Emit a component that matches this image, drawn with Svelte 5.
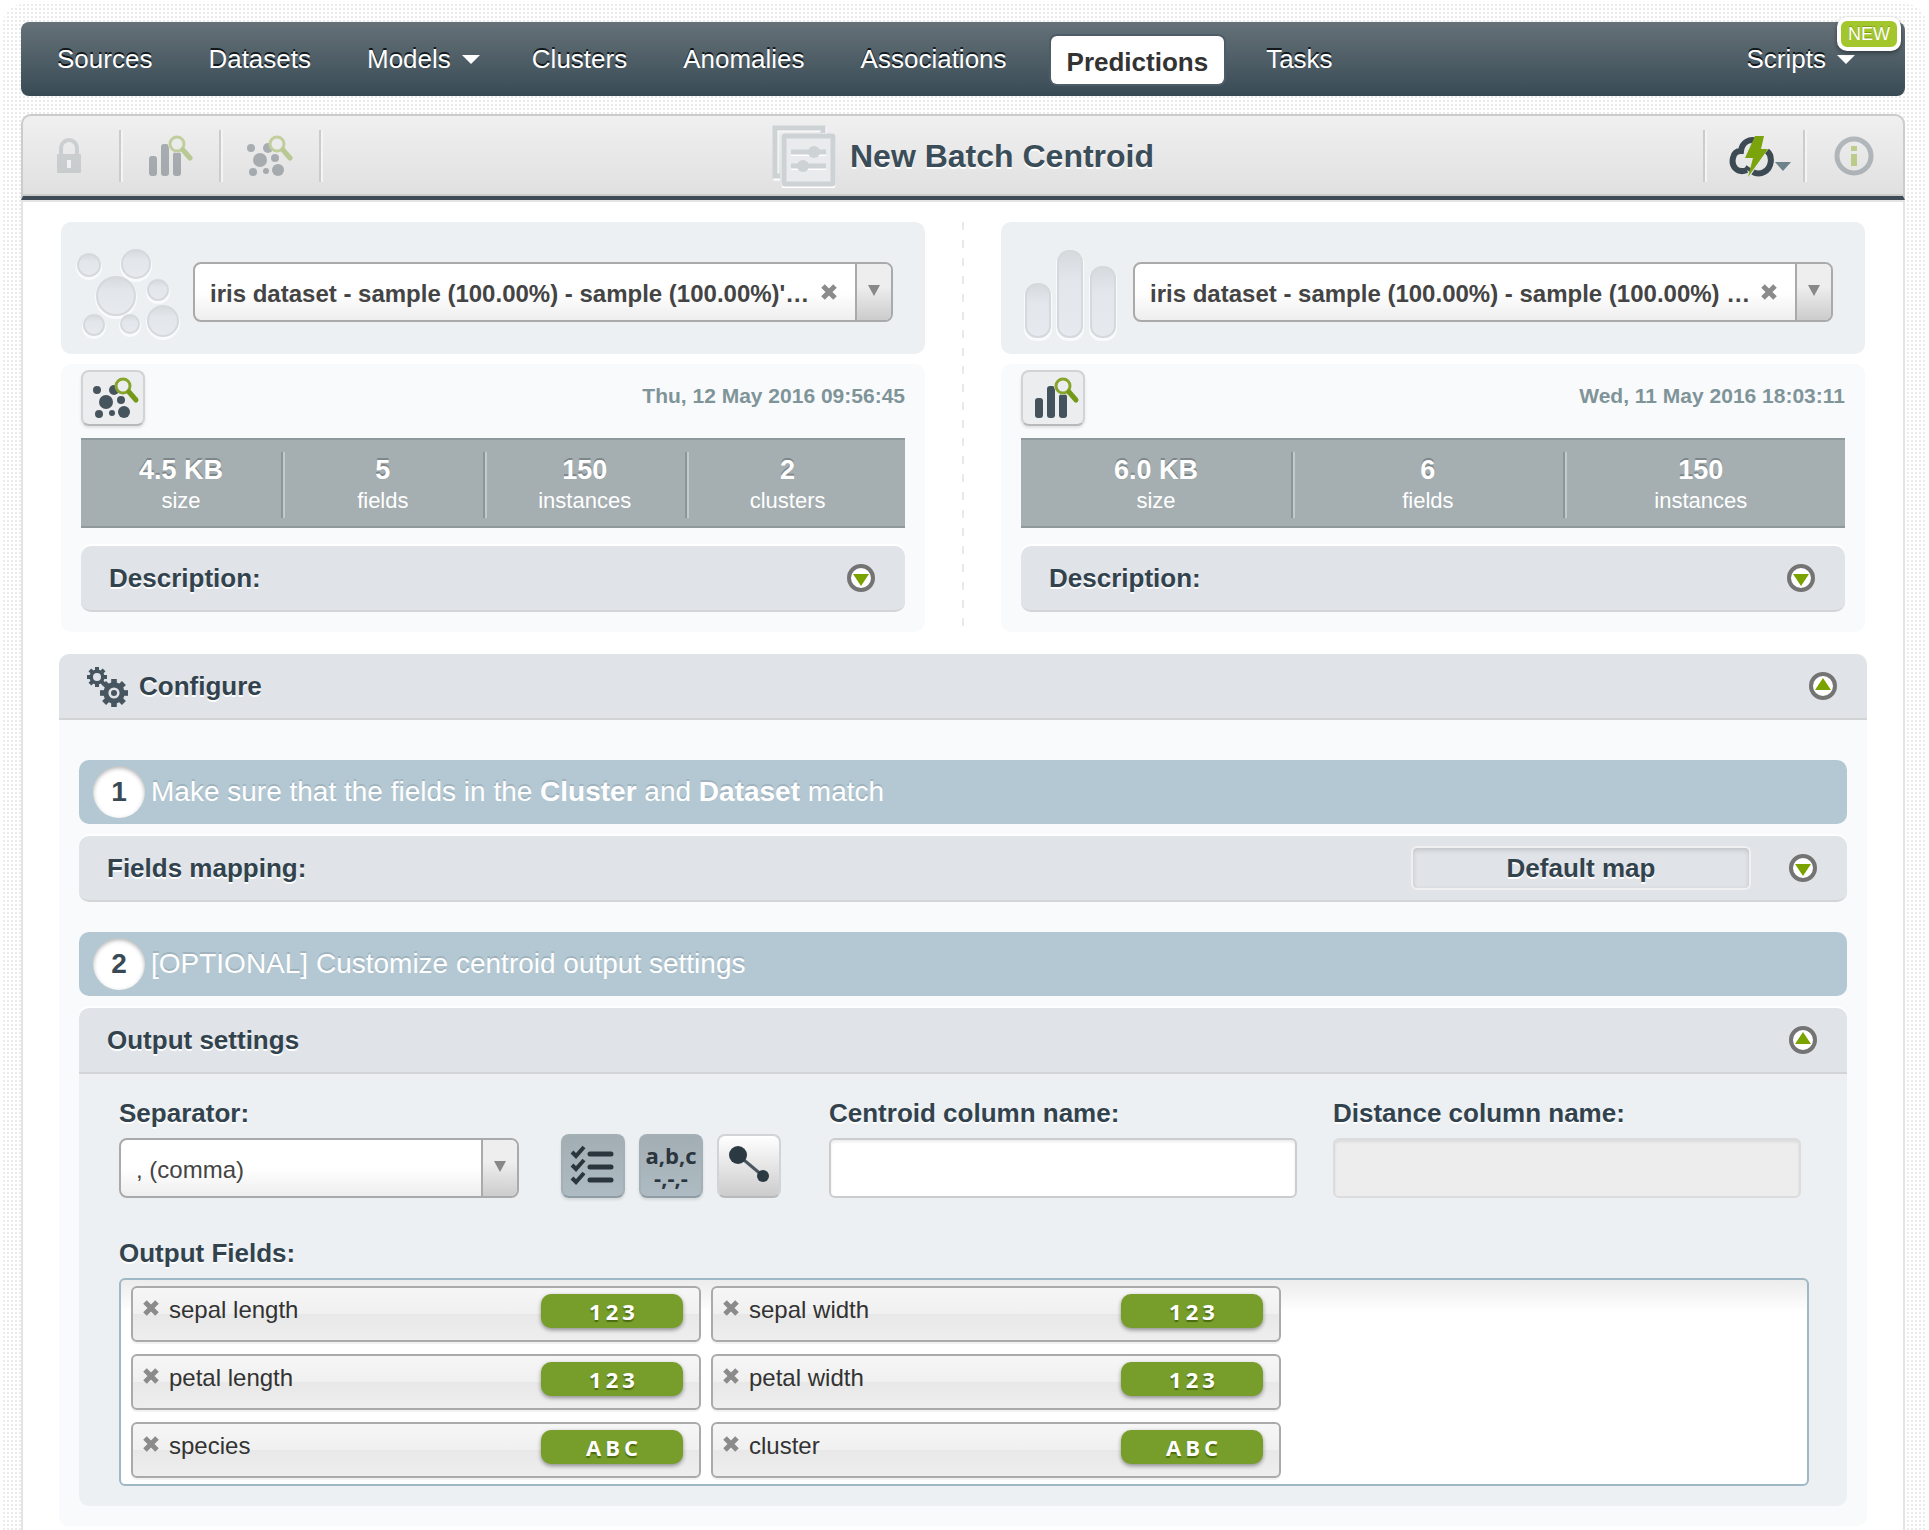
<script>
let menu = [
    { name: "Sources" },
    { name: "Datasets" },
    { name: "Models", caret: true },
    { name: "Clusters" },
    { name: "Anomalies" },
    { name: "Associations" },
    { name: "Predictions", active: true },
    { name: "Tasks" }
]

let sources = $state([
    {
        id: "cluster",
        label: "Cluster",
        name: "iris dataset - sample (100.00%) - sample (100.00%)'…",
        date: "Thu, 12 May 2016 09:56:45",
        stats: [["4.5 KB", "size"], ["5", "fields"], ["150", "instances"], ["2", "clusters"]],
        open: false
    },
    {
        id: "dataset",
        label: "Dataset",
        name: "iris dataset - sample (100.00%) - sample (100.00%) …",
        date: "Wed, 11 May 2016 18:03:11",
        stats: [["6.0 KB", "size"], ["6", "fields"], ["150", "instances"]],
        open: false
    }
])

let fields = $state([
    { name: "sepal length", type: "123" },
    { name: "sepal width", type: "123" },
    { name: "petal length", type: "123" },
    { name: "petal width", type: "123" },
    { name: "species", type: "ABC" },
    { name: "cluster", type: "ABC" }
])

let header = $state(true)
let allFields = $state(true)
let distance = $state(false)
let centroidName = $state("")
let distanceName = $state("")
let configureOpen = $state(true)
let mappingOpen = $state(false)
let outputOpen = $state(true)

function removeField(field) {
    fields = fields.filter((f) => f !== field)
}

// angles of the gear teeth
let teeth = [0, 45, 90, 135, 180, 225, 270, 315]
</script>

{#snippet cross()}
    <svg class="cross" viewBox="0 0 16 16" aria-hidden="true">
        <path d="M2 2L14 14M14 2L2 14" stroke="#8b8b8b" stroke-width="5" />
    </svg>
{/snippet}

{#snippet magnifier()}
    <circle cx="31" cy="10" r="7" fill="none" stroke="#86a52a" stroke-width="3" />
    <path d="M37 16L44 24" stroke="#759918" stroke-width="5" stroke-linecap="round" />
{/snippet}

{#snippet clusterIcon()}
    <svg class="tool" viewBox="0 0 48 44" aria-hidden="true">
        <g fill="#46545e">
            <circle cx="5" cy="14" r="4" />
            <circle cx="22" cy="14" r="5" />
            <circle cx="14" cy="26" r="7" />
            <circle cx="29" cy="24" r="4" />
            <circle cx="7" cy="38" r="4" />
            <circle cx="20" cy="37" r="3" />
            <circle cx="32" cy="36" r="6" />
        </g>
        <circle cx="31" cy="10" r="7" fill="#ecedee" />
        {@render magnifier()}
    </svg>
{/snippet}

{#snippet barsIcon()}
    <svg class="tool" viewBox="0 0 48 44" aria-hidden="true">
        <g fill="#43525c">
            <rect x="3" y="22" width="8" height="20" rx="3" />
            <rect x="15" y="10" width="8" height="32" rx="3" />
            <rect x="27" y="18" width="8" height="24" rx="3" />
        </g>
        <circle cx="31" cy="10" r="9" fill="#ecedee" />
        {@render magnifier()}
    </svg>
{/snippet}

{#snippet toggle(open)}
    <svg class="toggle" viewBox="0 0 32 32" aria-hidden="true">
        <circle cx="16" cy="16" r="12" fill="#fff" stroke="#747474" stroke-width="4" />
        {#if open}
            <path d="M16 8L24 20H8Z" fill="#7ba300" />
        {:else}
            <path d="M16 24L24 12H8Z" fill="#7ba300" />
        {/if}
    </svg>
{/snippet}

{#snippet gear(x, y, r)}
    <g transform="translate({x} {y})">
        {#each teeth as angle}
            <rect x={-r / 5} y={-r} width={r / 2.5} height={r / 2} fill="#46555f" transform="rotate({angle})" />
        {/each}
        <circle r={r * 0.58} fill="none" stroke="#46555f" stroke-width={r * 0.36} />
    </g>
{/snippet}

<div class="page">
    <nav>
        {#each menu as item}
            <a href="#{item.name.toLowerCase()}" class:active={item.active} class:more={item.caret}>
                {item.name}
                {#if item.caret}<span class="caret"></span>{/if}
            </a>
        {/each}
        <a href="#scripts" class="more scripts">
            Scripts <span class="caret"></span>
            <span class="new">NEW</span>
        </a>
    </nav>

    <main>
        <header>
            <div class="tools">
                <button class="dim" aria-label="Privacy">
                    <svg class="tool" viewBox="0 0 48 44" aria-hidden="true">
                        <path d="M15 22V14a8 8 0 0 1 16 0V22" fill="none" stroke="#a0a7ab" stroke-width="4" />
                        <rect x="11" y="20" width="24" height="19" rx="1" fill="#a0a7ab" />
                        <path d="M23 26V34" stroke="#fff" stroke-width="4" />
                    </svg>
                </button>
                <button class="dim" aria-label="View dataset">{@render barsIcon()}</button>
                <button class="dim" aria-label="View cluster">{@render clusterIcon()}</button>
            </div>
            <h1>
                <svg class="batch" viewBox="0 0 64 64" aria-hidden="true">
                    <path d="M8 54H4V5H52V10" fill="none" stroke="#fff" stroke-width="5" />
                    <path d="M8 52H3V4H51V9" fill="none" stroke="#cdd2d4" stroke-width="5" />
                    <rect x="12" y="14" width="49" height="48" rx="1" fill="none" stroke="#fff" stroke-width="5" />
                    <rect x="12" y="12" width="49" height="48" rx="1" fill="#e9ebec" stroke="#cdd2d4" stroke-width="5" />
                    <path d="M19 30H54M19 44H54" stroke="#fff" stroke-width="4" />
                    <path d="M19 28H54M19 42H54" stroke="#cdd2d4" stroke-width="5" />
                    <circle cx="42" cy="28" r="6" fill="#cdd2d4" />
                    <circle cx="31" cy="42" r="6" fill="#cdd2d4" />
                </svg>
                New Batch Centroid
            </h1>
            <div class="tools end">
                <button aria-label="Actions">
                    <svg class="cloud" viewBox="0 0 64 44" aria-hidden="true">
                        <path d="M18 36C8 40 2 32 4 24C5 18 9 17 12 17C13 8 21 4 28 7M38 17C44 22 43 34 35 38C32 40 27 40 24 38M18 36L20 33" fill="none" stroke="#3d4a54" stroke-width="6" />
                        <path d="M26 2H35L32 15H39L19 43L24 24H16Z" fill="#7aa30c" />
                        <path d="M46 28H62L54 37Z" fill="#6e828b" />
                    </svg>
                </button>
                <button class="dim" aria-label="Info">
                    <svg class="tool" viewBox="0 0 48 44" aria-hidden="true">
                        <circle cx="24" cy="22" r="17" fill="none" stroke="#5d6a73" stroke-width="5" />
                        <path d="M24 12V17M24 20V32" stroke="#7ba300" stroke-width="6" />
                    </svg>
                </button>
            </div>
        </header>

        <div class="sources">
            {#each sources as source}
                <section>
                    <div class="pick">
                        <svg class="big" viewBox="0 0 132 132" aria-hidden="true">
                            <defs>
                                <linearGradient id="dent-{source.id}" x2="0" y2="1">
                                    <stop offset="0" stop-color="#d6d9dd" />
                                    <stop offset="0.35" stop-color="#e3e6eb" />
                                    <stop offset="1" stop-color="#e6e9ee" />
                                </linearGradient>
                            </defs>
                            {#if source.id === "cluster"}
                                {#each [[28, 43, 11], [75, 42, 14], [55, 74, 19], [97, 68, 10], [102, 99, 15], [69, 102, 9], [33, 103, 10]] as [cx, cy, r]}
                                    <circle {cx} cy={cy + 2} r={r + 2} fill="#f8fafb" />
                                    <circle {cx} {cy} {r} fill="url(#dent-{source.id})" stroke="#d5d9dd" stroke-width="2" />
                                {/each}
                            {:else}
                                {#each [[25, 62, 53], [57, 29, 86], [90, 45, 70]] as [x, y, height]}
                                    <rect x={x - 2} {y} width="28" height={height + 4} rx="12" fill="#f8fafb" />
                                    <rect {x} {y} width="24" {height} rx="11" fill="url(#dent-{source.id})" stroke="#d5d9dd" stroke-width="2" />
                                {/each}
                            {/if}
                        </svg>
                        <div class="combo">
                            <select class="strong" aria-label={source.label}>
                                <option>{source.name}</option>
                            </select>
                            <button class="clear" aria-label="Clear {source.label}">{@render cross()}</button>
                            <span class="arrow"></span>
                        </div>
                    </div>
                    <div class="info">
                        <div class="line">
                            <button class="view" aria-label="View {source.label}">
                                {#if source.id === "cluster"}{@render clusterIcon()}{:else}{@render barsIcon()}{/if}
                            </button>
                            <time>{source.date}</time>
                        </div>
                        <ul class="stats" class:three={source.stats.length === 3}>
                            {#each source.stats as [value, unit]}
                                <li><strong>{value}</strong><span>{unit}</span></li>
                            {/each}
                        </ul>
                        <button class="bar" aria-expanded={source.open} onclick={() => (source.open = !source.open)}>
                            <span>Description:</span>
                            {@render toggle(source.open)}
                        </button>
                    </div>
                </section>
            {/each}
        </div>

        <section class="configure">
            <button class="bar top" aria-expanded={configureOpen} onclick={() => (configureOpen = !configureOpen)}>
                <svg class="gears" viewBox="0 0 42 42" aria-hidden="true">
                    {@render gear(10, 12, 10)}
                    {@render gear(27, 28, 14)}
                    <circle cx="27" cy="28" r="3" fill="#46555f" />
                </svg>
                <span>Configure</span>
                {@render toggle(configureOpen)}
            </button>
            {#if configureOpen}
                <div class="steps">
                    <h2><span class="number">1</span><span>Make sure that the fields in the <b>Cluster</b> and <b>Dataset</b> match</span></h2>
                    <button class="bar" aria-expanded={mappingOpen} onclick={() => (mappingOpen = !mappingOpen)}>
                        <span>Fields mapping:</span>
                        <span class="map">Default map</span>
                        {@render toggle(mappingOpen)}
                    </button>

                    <h2 class="second"><span class="number">2</span><span>[OPTIONAL] Customize centroid output settings</span></h2>
                    <button class="bar top" aria-expanded={outputOpen} onclick={() => (outputOpen = !outputOpen)}>
                        <span>Output settings</span>
                        {@render toggle(outputOpen)}
                    </button>
                    {#if outputOpen}
                        <div class="output">
                            <div class="row">
                                <div class="separator">
                                    <label for="separator">Separator:</label>
                                    <div class="combo">
                                        <select id="separator">
                                            <option>, (comma)</option>
                                            <option>; (semicolon)</option>
                                        </select>
                                        <span class="arrow"></span>
                                    </div>
                                </div>
                                <div class="switches">
                                    <button class:on={allFields} aria-pressed={allFields} aria-label="All fields" onclick={() => (allFields = !allFields)}>
                                        <svg viewBox="0 0 64 64" aria-hidden="true">
                                            <g fill="none" stroke="#2a353d">
                                                <path d="M11 18L15 22L23 13M11 31L15 35L23 26M11 44L15 48L23 39" stroke-width="4" />
                                                <path d="M29 20H50M29 33H50M29 46H50" stroke-width="5" stroke-linecap="round" />
                                            </g>
                                        </svg>
                                    </button>
                                    <button class="abc" class:on={header} aria-pressed={header} onclick={() => (header = !header)}>
                                        a,b,c<br>-,-,-
                                    </button>
                                    <button class:on={distance} aria-pressed={distance} aria-label="Distance" onclick={() => (distance = !distance)}>
                                        <svg viewBox="0 0 64 64" aria-hidden="true">
                                            <path d="M21 21L46 42" stroke="#4b565e" stroke-width="3" />
                                            <circle cx="21" cy="21" r="9" fill="#2a3942" />
                                            <circle cx="46" cy="42" r="6" fill="#2a3942" />
                                        </svg>
                                    </button>
                                </div>
                                <div>
                                    <label for="centroid">Centroid column name:</label>
                                    <input id="centroid" type="text" bind:value={centroidName}>
                                </div>
                                <div>
                                    <label for="distance">Distance column name:</label>
                                    <input id="distance" type="text" bind:value={distanceName} disabled={!distance}>
                                </div>
                            </div>

                            <h3>Output Fields:</h3>
                            <ul class="fields">
                                {#each fields as field}
                                    <li>
                                        <button aria-label="Remove {field.name}" onclick={() => removeField(field)}>{@render cross()}</button>
                                        <span class="name">{field.name}</span>
                                        <span class="type">
                                            {#each field.type as letter}<span>{letter}</span>{/each}
                                        </span>
                                    </li>
                                {/each}
                            </ul>
                        </div>
                    {/if}
                </div>
            {/if}
        </section>
    </main>
</div>

<style>
:global(body) {
    background: #fff;
    font-family: "Liberation Sans", Arial, sans-serif;
    color: #32434e;
}
* {
    box-sizing: border-box;
}
button {
    border: 0;
    padding: 0;
    background: none;
    font: inherit;
    color: inherit;
    cursor: pointer;
}
svg {
    display: block;
    flex: none;
}
ul {
    list-style: none;
    margin: 0;
    padding: 0;
}
.page {
    margin: 4px 3px 0;
    padding: 18px 21px 0 18px;
    border-radius: 20px 20px 0 0;
    background-color: #fff;
    background-image: linear-gradient(90deg, transparent 50%, #fff 50%), linear-gradient(#ebebeb 50%, #fff 50%);
    background-size: 4px 4px;
}

nav {
    display: flex;
    align-items: center;
    height: 74px;
    padding: 0 26px 0 8px;
    border-radius: 8px;
    background: linear-gradient(#667178, #384b55);
}
nav a {
    display: flex;
    align-items: center;
    gap: 11px;
    padding: 0 28px;
    color: #fff;
    font-size: 26px;
    line-height: 48px;
    text-decoration: none;
    text-shadow: 0 -2px 0 #11171a;
}
nav a.more {
    padding-right: 24px;
}
nav a.active {
    margin: 2px 14px 0 16px;
    padding: 4px 16px 0;
    line-height: 44px;
    border-radius: 6px;
    background: #fff;
    color: #333;
    font-weight: bold;
    text-shadow: none;
    box-shadow: 0 0 0 2px #4d5d67;
}
nav .scripts {
    position: relative;
    margin-left: auto;
}
.caret {
    border: 9px solid transparent;
    border-top: 9px solid #fff;
    border-bottom: 0;
}
.new {
    position: absolute;
    top: -18px;
    right: -22px;
    padding: 0 7px;
    border: 4px solid #fff;
    border-radius: 10px;
    background: #a2c62c;
    font-size: 18px;
    line-height: 26px;
    text-shadow: 0 -1px 0 #7d9c1c;
    box-shadow: 0 2px 4px rgba(0, 0, 0, 0.4);
}

main {
    margin-top: 18px;
    padding-bottom: 30px;
    border: 2px solid #e4e4e4;
    border-top: 0;
    border-bottom: 0;
    border-radius: 10px 10px 0 0;
    background: #fff;
}
header {
    display: grid;
    grid-template-columns: 1fr auto 1fr;
    align-items: center;
    height: 86px;
    margin: 0 -2px;
    border: 2px solid #ccc;
    border-bottom: 4px solid #3f4c57;
    border-radius: 10px 10px 0 0;
    background: linear-gradient(#f0f0f0, #e0e0e0);
    box-shadow: inset 0 -2px 0 #ccc, 0 2px 0 #e4e4e4;
}
.tools {
    display: flex;
    margin-left: -2px;
}
.tools.end {
    justify-content: flex-end;
}
.tools button {
    display: flex;
    align-items: center;
    justify-content: center;
    width: 100px;
    height: 52px;
    border-right: 2px solid #ccc;
    box-shadow: 2px 0 0 #f4f4f4;
}
.tools.end button {
    border-right: 0;
    border-left: 2px solid #ccc;
    box-shadow: inset 2px 0 0 #f4f4f4;
}
.dim svg {
    opacity: 0.4;
}
.tool {
    width: 48px;
    height: 44px;
}
.cloud {
    width: 64px;
    height: 44px;
    margin-left: 14px;
}
h1 {
    display: flex;
    align-items: center;
    gap: 14px;
    margin: 0;
    font-size: 32px;
    line-height: 64px;
    color: #3a4d58;
    text-shadow: 0 2px 0 #fff;
}
.batch {
    width: 64px;
    height: 64px;
}

.sources {
    display: grid;
    grid-template-columns: 1fr 1fr;
    gap: 76px;
    margin: 22px 38px;
    background: repeating-linear-gradient(#e8e9ea 0 8px, #fff 8px 18px) center / 2px 100% no-repeat;
}
.pick {
    display: grid;
    grid-template-columns: 132px 1fr;
    align-items: center;
    padding-right: 32px;
    border-radius: 10px;
    background: #ecf0f3;
}
.big {
    width: 132px;
    height: 132px;
}
.combo {
    display: grid;
    grid-template-columns: 1fr 52px 36px;
    align-items: center;
    height: 60px;
    border: 2px solid #aaa;
    border-radius: 8px;
    background: linear-gradient(#fff 50%, #eee);
}
.pick .combo {
    margin-top: 8px;
}
.combo select {
    grid-area: 1 / 1 / 2 / 4;
    width: 100%;
    height: 56px;
    padding: 2px 40px 0 15px;
    border: 0;
    background: none;
    appearance: none;
    font: 24px "Liberation Sans", Arial, sans-serif;
    color: #444;
}
.combo .strong {
    font-weight: bold;
}
.clear {
    grid-area: 1 / 2;
    justify-self: center;
}
.cross {
    width: 16px;
    height: 16px;
}
.arrow {
    grid-area: 1 / 3;
    display: flex;
    justify-content: center;
    align-items: center;
    height: 100%;
    padding-bottom: 4px;
    border-left: 2px solid #aaa;
    border-radius: 0 6px 6px 0;
    background: linear-gradient(#eee 40%, #ccc);
    pointer-events: none;
}
.arrow::after {
    content: "";
    border: 6px solid transparent;
    border-top: 11px solid #888;
    border-bottom: 0;
}
.info {
    margin-top: 10px;
    padding: 6px 20px 20px;
    border-radius: 10px;
    background: #f9fafc;
}
.line {
    display: flex;
    justify-content: space-between;
}
.view {
    display: flex;
    align-items: center;
    justify-content: center;
    width: 64px;
    height: 56px;
    padding-left: 6px;
    border: 2px solid #d2d3d4;
    border-bottom-color: #b8b9ba;
    border-radius: 8px;
    background: #ecedee;
    box-shadow: 0 2px 3px rgba(0, 0, 0, 0.1);
}
time {
    font-size: 21px;
    line-height: 52px;
    font-weight: bold;
    color: #7f9498;
}
.stats {
    display: flex;
    height: 90px;
    margin: 12px 0 18px;
    padding: 12px 0 8px;
    border: 2px solid #8f999d;
    border-left: 0;
    border-right: 0;
    background: #a5aeb1;
    color: #fff;
    text-align: center;
}
.stats li {
    width: 24.5%;
    border-right: 2px solid #8c9599;
    box-shadow: 2px 0 0 #c3cacc;
}
.stats.three li {
    width: 33%;
}
.stats li:last-child {
    border: 0;
    box-shadow: none;
}
.stats strong {
    display: block;
    font-size: 27px;
    line-height: 36px;
    text-shadow: 0 -2px 0 #7e878a;
}
.stats span {
    display: block;
    font-size: 22px;
    line-height: 26px;
}
.bar {
    display: flex;
    align-items: center;
    width: 100%;
    height: 66px;
    padding: 0 28px;
    border-bottom: 2px solid #d3d4d6;
    border-radius: 10px;
    background: #e0e3e8;
    box-shadow: 0 -2px 0 #fff;
    font-size: 26px;
    font-weight: bold;
    text-shadow: 0 2px 0 #fff;
}
.bar.top {
    border-radius: 10px 10px 0 0;
}
.toggle {
    width: 32px;
    height: 32px;
    margin-left: auto;
}

.configure {
    margin: 0 36px;
    border-radius: 10px;
    background: #f9fafc;
}
.configure > .bar {
    gap: 10px;
}
.gears {
    width: 42px;
    height: 42px;
}
.steps {
    padding: 40px 20px 20px;
}
h2 {
    display: flex;
    align-items: center;
    gap: 6px;
    height: 64px;
    margin: 0 0 12px;
    padding: 0 14px;
    border-radius: 10px;
    background: #b4c8d3;
    color: #fff;
    font-size: 28px;
    font-weight: normal;
    text-shadow: 0 -2px 0 #9fb3be;
}
h2.second {
    margin-top: 30px;
}
.number {
    width: 52px;
    border-radius: 50%;
    background: #fff;
    color: #3a4a54;
    font-weight: bold;
    line-height: 52px;
    text-align: center;
    text-shadow: none;
    box-shadow: inset 0 2px 4px rgba(0, 0, 0, 0.3);
}
.map {
    width: 340px;
    margin: 0 36px 0 auto;
    border: 2px solid #f0f0f0;
    border-radius: 6px;
    box-shadow: inset 0 2px 5px rgba(0, 0, 0, 0.15);
    line-height: 40px;
}
.map + .toggle {
    margin-left: 0;
}
.output {
    padding: 20px 38px 20px 40px;
    border-radius: 0 0 10px 10px;
    background: #ecf0f3;
}
.row {
    display: grid;
    grid-template-columns: 400px auto 1fr 1fr;
    column-gap: 36px;
    align-items: end;
    padding-right: 8px;
}
label,
h3 {
    display: block;
    margin: 0;
    font-size: 26px;
    font-weight: bold;
    line-height: 38px;
    text-shadow: 0 2px 0 #fff;
}
label {
    margin-bottom: 6px;
}
.separator .combo {
    grid-template-columns: 1fr 0 36px;
}
.switches {
    display: flex;
    gap: 14px;
    margin: 0 12px 0 6px;
}
.switches button {
    width: 64px;
    height: 64px;
    border: 2px solid #d2d3d4;
    border-bottom-color: #b8b9ba;
    border-radius: 8px;
    background: linear-gradient(#fff, #ccc);
}
.switches svg {
    width: 64px;
    height: 64px;
    margin: -2px;
}
.switches .on {
    border-color: #a4b0b6;
    border-bottom-color: #8f9ca3;
    background: linear-gradient(#a3aeb4, #aebbc2);
    box-shadow: 0 2px 3px rgba(0, 0, 0, 0.1);
}
.abc {
    font: bold 22px/22px "Open Sans", sans-serif;
    color: #2a353d;
}
input {
    display: block;
    width: 100%;
    height: 60px;
    padding: 0 14px;
    border: 2px solid #ccc;
    border-radius: 6px;
    background: #fff;
    box-shadow: inset 0 2px 3px rgba(0, 0, 0, 0.08);
    font: 24px "Liberation Sans", Arial, sans-serif;
}
input:disabled {
    border-color: #dcdcdc;
    background: #ededed;
}
h3 {
    margin-top: 36px;
}
.fields {
    display: grid;
    grid-template-columns: repeat(auto-fill, 570px);
    gap: 12px 10px;
    margin-top: 6px;
    padding: 6px 10px;
    border: 2px solid #9fb8c6;
    border-radius: 6px;
    background: linear-gradient(#ececec, #fff 32px);
}
.fields li {
    display: flex;
    align-items: flex-start;
    height: 56px;
    padding: 6px 16px 0 10px;
    border: 2px solid #aaa;
    border-radius: 6px;
    background: linear-gradient(#f6f6f6, #f0f0f0 50%, #e8e8e8 50%, #eee);
    box-shadow: 0 2px 0 #f2f2f2;
    color: #333;
}
.fields button {
    margin-top: 6px;
}
.name {
    margin-left: 10px;
    font-size: 24px;
    line-height: 32px;
}
.type {
    display: flex;
    justify-content: center;
    gap: 4px;
    width: 142px;
    margin-left: auto;
    border-radius: 10px;
    background: #779e2a;
    color: #fff;
    font: bold 22px/34px "Open Sans", sans-serif;
    text-shadow: 0 2px 1px #4d6a12;
    box-shadow: 0 2px 4px rgba(0, 0, 0, 0.4);
}
</style>
